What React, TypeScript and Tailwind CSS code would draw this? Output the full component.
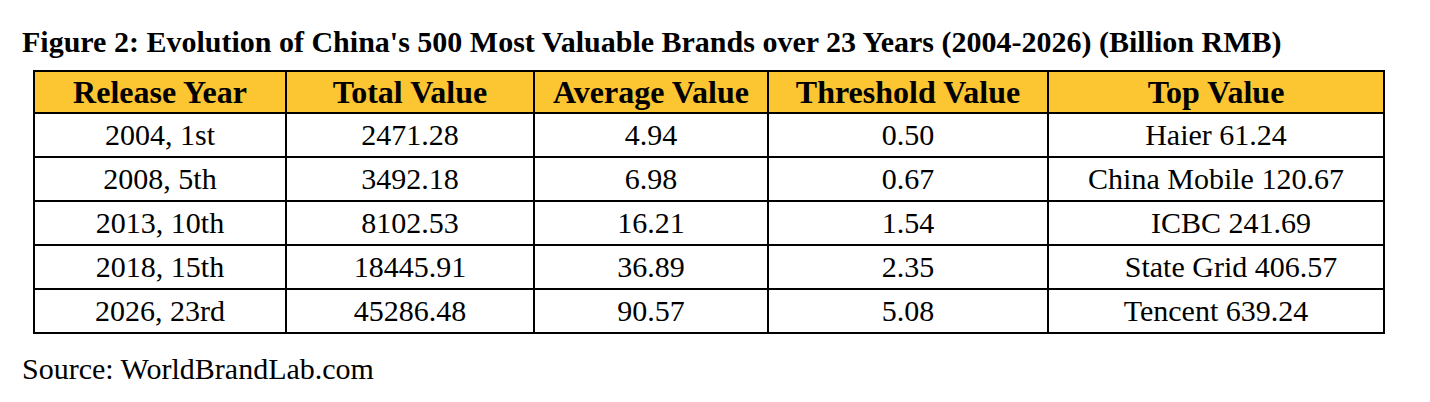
const rows = [
  { cells: ["2004, 1st", "2471.28", "4.94", "0.50", "Haier 61.24"], shift: false },
  { cells: ["2008, 5th", "3492.18", "6.98", "0.67", "China Mobile 120.67"], shift: false },
  { cells: ["2013, 10th", "8102.53", "16.21", "1.54", "ICBC 241.69"], shift: true },
  { cells: ["2018, 15th", "18445.91", "36.89", "2.35", "State Grid 406.57"], shift: true },
  { cells: ["2026, 23rd", "45286.48", "90.57", "5.08", "Tencent 639.24"], shift: false },
];

const headers = ["Release Year", "Total Value", "Average Value", "Threshold Value", "Top Value"];

export default function App() {
  return (
    <div className="h-[402px] w-[1430px] bg-white px-[22px] pt-[25px] font-['Liberation_Serif','Times_New_Roman',serif] text-black">
      <h1 className="text-[30px] font-bold leading-[34px]">
        Figure 2: Evolution of China's 500 Most Valuable Brands over 23 Years (2004-2026) (Billion RMB)
      </h1>
      <table className="mt-[11px] ml-[11px] w-[1350px] table-fixed border-collapse border-2 border-black text-center text-[30px]">
        <colgroup>
          <col className="w-[252px]" />
          <col className="w-[248px]" />
          <col className="w-[234px]" />
          <col className="w-[280px]" />
          <col className="w-[336px]" />
        </colgroup>
        <thead>
          <tr className="h-[42px] bg-[#fcc532]">
            {headers.map((h) => (
              <th key={h} className="border-2 border-black text-[32px] font-bold leading-none">
                {h}
              </th>
            ))}
          </tr>
        </thead>
        <tbody>
          {rows.map((r) => (
            <tr key={r.cells[0]} className="h-[44px]">
              {r.cells.map((c, i) => (
                <td
                  key={i}
                  className={
                    i === 4 && r.shift
                      ? "border-2 border-black pl-[30px] leading-none"
                      : "border-2 border-black leading-none"
                  }
                >
                  {c}
                </td>
              ))}
            </tr>
          ))}
        </tbody>
      </table>
      <p className="mt-[18px] text-[30px] leading-[34px]">Source: WorldBrandLab.com</p>
    </div>
  );
}
